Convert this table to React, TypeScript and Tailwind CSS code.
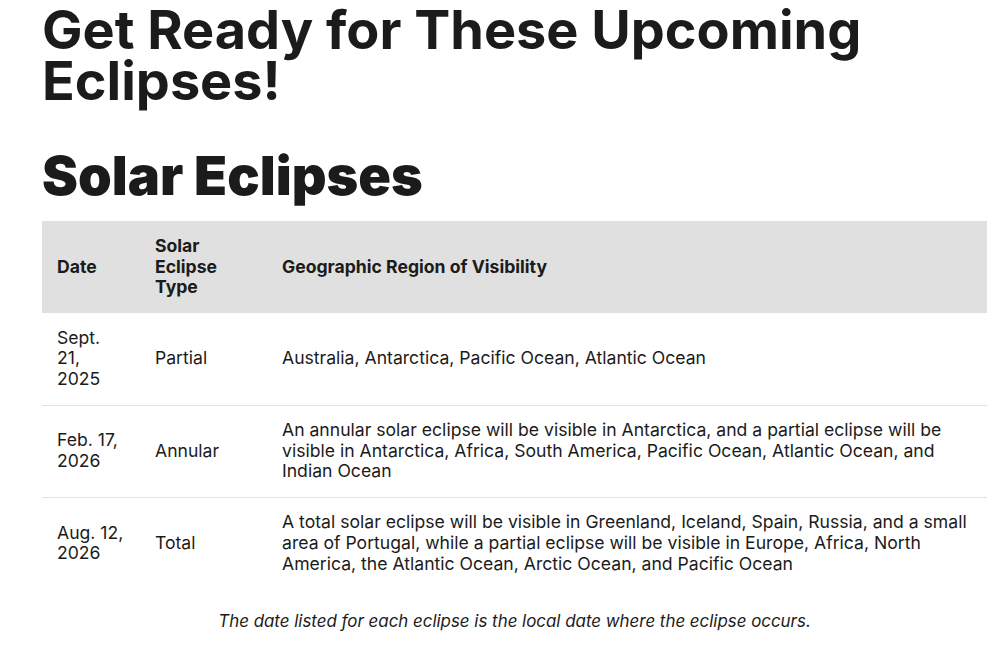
export default function App() {
  const rows = [
    { date: "Sept. 21, 2025", type: "Partial", region: "Australia, Antarctica, Pacific Ocean, Atlantic Ocean" },
    { date: "Feb. 17, 2026", type: "Annular", region: "An annular solar eclipse will be visible in Antarctica, and a partial eclipse will be visible in Antarctica, Africa, South America, Pacific Ocean, Atlantic Ocean, and Indian Ocean" },
    { date: "Aug. 12, 2026", type: "Total", region: "A total solar eclipse will be visible in Greenland, Iceland, Spain, Russia, and a small area of Portugal, while a partial eclipse will be visible in Europe, Africa, North America, the Atlantic Ocean, Arctic Ocean, and Pacific Ocean" },
  ];
  return (
    <div className="bg-white text-[#1b1b1b] min-h-[650px] pl-[42px] pr-4" style={{ fontFamily: "Inter, sans-serif" }}>
      <h1 className="font-bold text-[54px] leading-[51px] pt-[4px] w-[940px]">
        Get Ready for These Upcoming Eclipses!
      </h1>
      <h2 className="font-black text-[54px] leading-[60px] mt-[40px]">
        Solar Eclipses
      </h2>
      <table className="w-[945px] table-fixed mt-[15px] border-collapse text-[17.6px] leading-[20.67px]" style={{ fontFamily: "Inter, sans-serif" }}>
        <colgroup>
          <col className="w-[98px]" />
          <col className="w-[127px]" />
          <col />
        </colgroup>
        <thead>
          <tr className="bg-[#e0e0e0] h-[92px]">
            <th className="text-left font-bold px-[15px]">Date</th>
            <th className="text-left font-bold px-[15px]">Solar Eclipse Type</th>
            <th className="text-left font-bold px-[15px]">Geographic Region of Visibility</th>
          </tr>
        </thead>
        <tbody>
          {rows.map((r, i) => (
            <tr key={r.date} className={i < rows.length - 1 ? "h-[92px] border-b border-[#dfe1e2]" : "h-[92px]"}>
              <td className="px-[15px] py-[14px]">{r.date}</td>
              <td className="px-[15px] py-[14px]">{r.type}</td>
              <td className="pl-[15px] pr-[10px] py-[14px]">{r.region}</td>
            </tr>
          ))}
        </tbody>
      </table>
      <p className="w-[945px] text-center italic text-[16.9px] leading-[24px] mt-[20px]" style={{ fontFamily: "Inter, sans-serif" }}>
        The date listed for each eclipse is the local date where the eclipse occurs.
      </p>
    </div>
  );
}
